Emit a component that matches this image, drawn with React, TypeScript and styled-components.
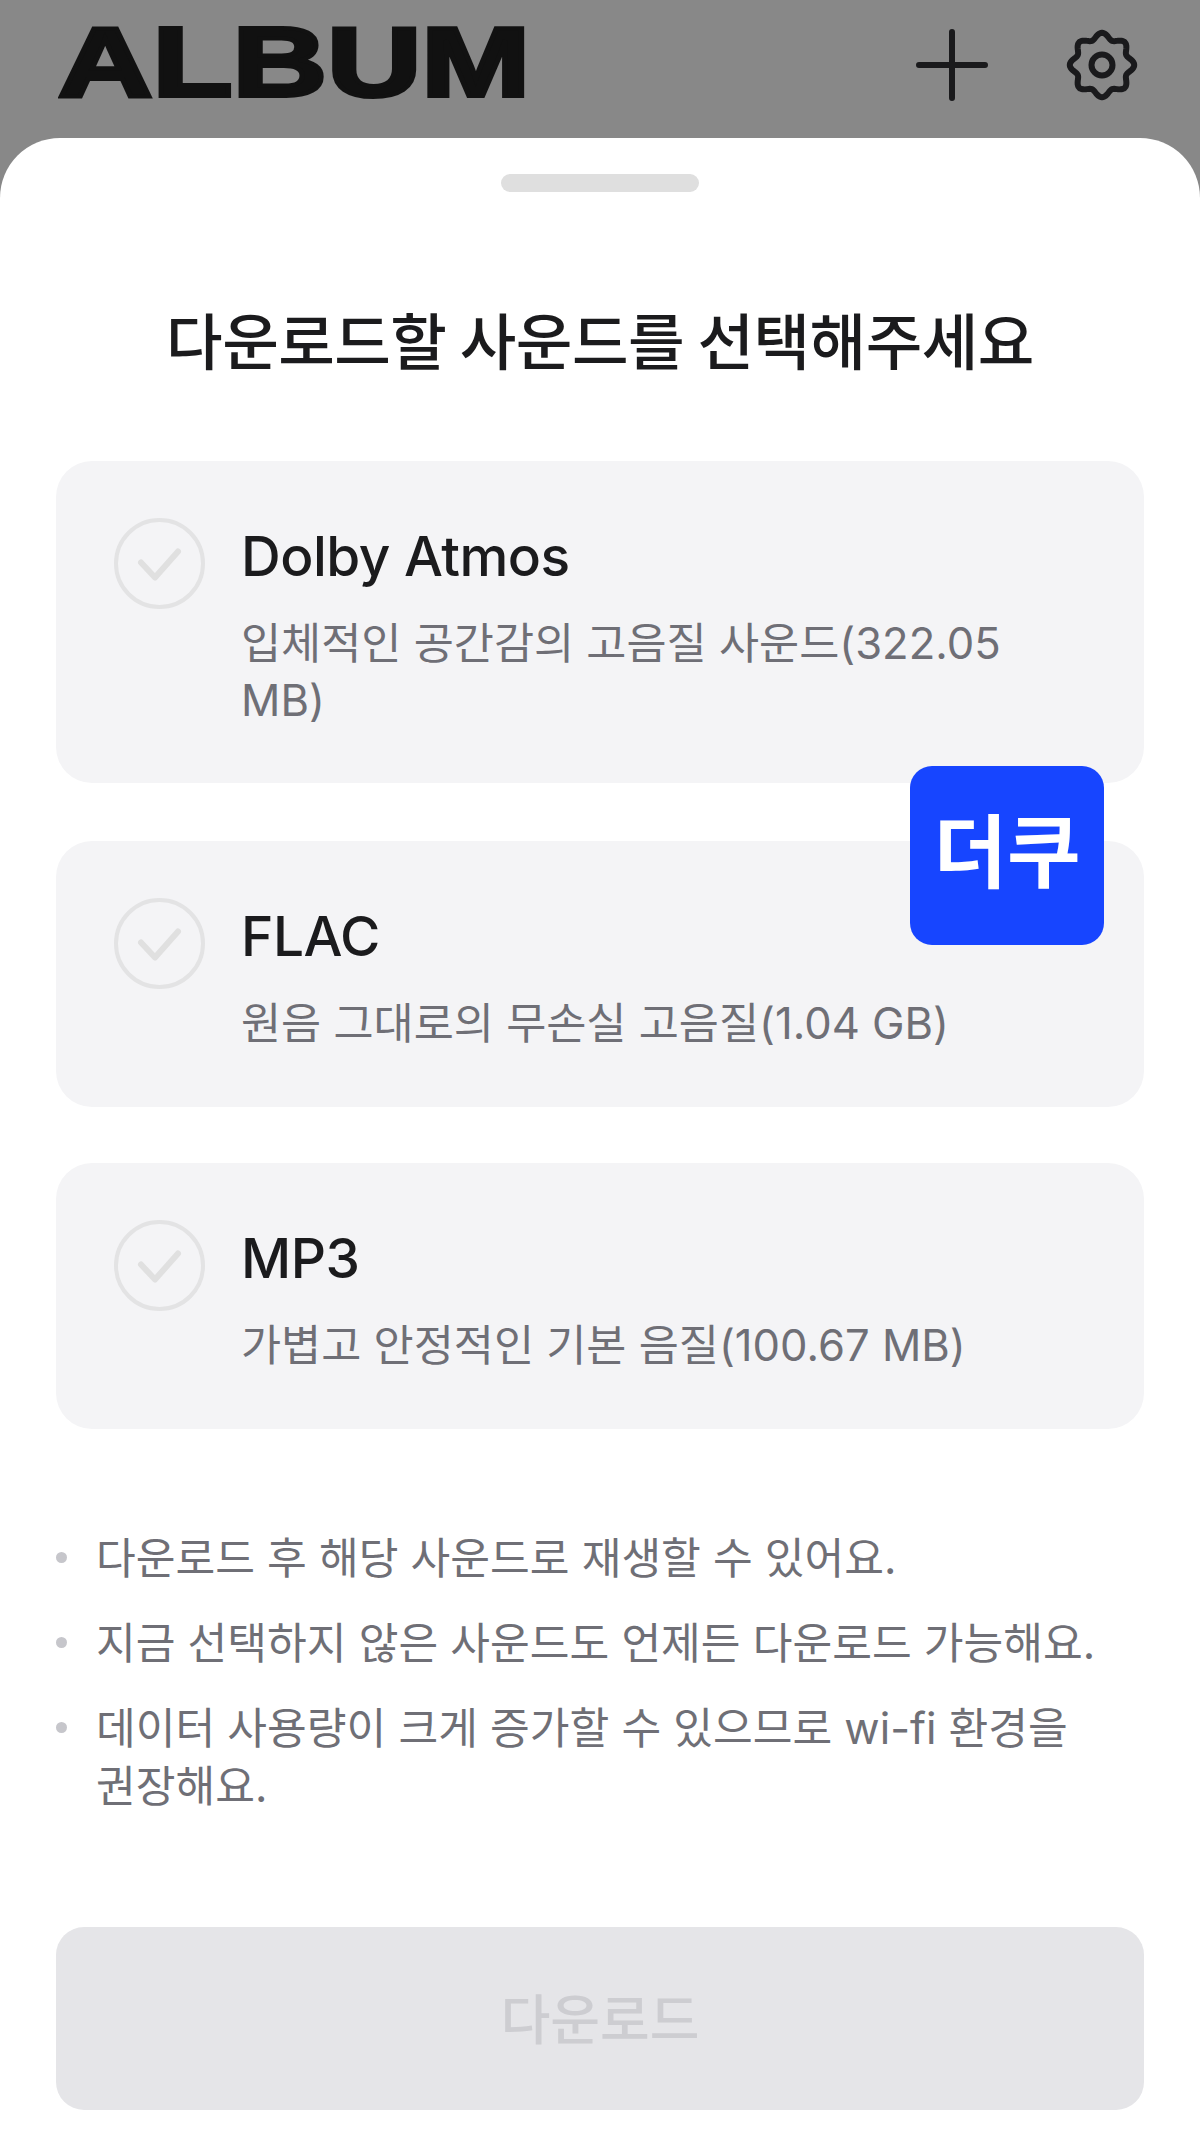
import React from "react";
import styled, { createGlobalStyle } from "styled-components";

const Global = createGlobalStyle`
  html, body { margin: 0; padding: 0; background: #fff; }
  #root { width: 1200px; height: 2152px; overflow: hidden; }
  * { box-sizing: border-box; }
`;

const KR = `"Inter", "Noto Sans CJK KR", sans-serif`;

const Page = styled.div`
  width: 1200px;
  height: 2152px;
  background: #888888;
  display: flex;
  flex-direction: column;
  font-family: ${KR};
`;

const TopBar = styled.header`
  height: 138px;
  flex: none;
  display: flex;
  align-items: flex-start;
  justify-content: space-between;
  padding: 0 58px;
  color: #111;
`;

const Logo = styled.div`
  font-family: "Liberation Sans", sans-serif;
  font-weight: 700;
  font-size: 98px;
  line-height: 72px;
  height: 72px;
  margin-top: 26px;
  transform: scaleX(1.335);
  transform-origin: left center;
  -webkit-text-stroke: 4px #111;
`;

const TopActions = styled.div`
  display: flex;
  align-items: center;
  gap: 76px;
  margin-top: 27px;
  margin-right: 2px;
`;

const Sheet = styled.section`
  position: relative;
  flex: 1;
  background: #ffffff;
  border-radius: 60px 60px 0 0;
  padding: 36px 56px 0;
  display: flex;
  flex-direction: column;
`;

const Handle = styled.div`
  width: 198px;
  height: 18px;
  border-radius: 9px;
  background: #dfdfdf;
  align-self: center;
`;

const Title = styled.h1`
  margin: 112px 0 0;
  text-align: center;
  font-family: "Noto Sans CJK KR", sans-serif;
  font-size: 61.5px;
  line-height: 70px;
  font-weight: 500;
  letter-spacing: -0.5px;
  color: #1b1b1d;
`;

const Options = styled.div`
  margin-top: 87px;
  display: flex;
  flex-direction: column;
  gap: 56px;
`;

const Card = styled.div<{ $h: number }>`
  background: #f4f4f6;
  border-radius: 36px;
  padding: 57px 58px 0;
  display: flex;
  gap: 36px;
  flex: none;
  height: ${(p) => p.$h}px;

  &:first-child {
    margin-bottom: 2px;
  }
`;

const Circle = styled.div`
  flex: none;
  width: 91px;
  height: 91px;
  border-radius: 50%;
  border: 4px solid #e3e3e4;
  display: flex;
  align-items: center;
  justify-content: center;
`;

const CardBody = styled.div`
  display: flex;
  flex-direction: column;
  min-width: 0;
`;

const CardTitle = styled.div`
  font-size: 55px;
  line-height: 64px;
  font-weight: 500;
  color: #1b1b1d;
  letter-spacing: -0.5px;
  margin-top: 6px;
`;

const CardDesc = styled.div`
  margin-top: 27px;
  font-size: 43.6px;
  line-height: 57px;
  font-weight: 400;
  color: #6f6f76;
`;

const Notes = styled.ul`
  list-style: none;
  margin: 100px 0 0;
  padding: 0;
  display: flex;
  flex-direction: column;
  gap: 27px;
`;

const Note = styled.li`
  position: relative;
  padding-left: 40px;
  font-size: 43.2px;
  line-height: 58px;
  font-weight: 400;
  color: #6f6f76;
  word-break: keep-all;

  &::before {
    content: "";
    position: absolute;
    left: 0;
    top: 23px;
    width: 11px;
    height: 11px;
    border-radius: 50%;
    background: #c6c6cb;
  }
`;

const Download = styled.button`
  margin-top: auto;
  margin-bottom: 42px;
  height: 183px;
  width: 100%;
  flex: none;
  border: none;
  border-radius: 28px;
  padding: 0 0 4px;
  background: #e5e5e8;
  color: #cdcdd1;
  font-family: "Noto Sans CJK KR", sans-serif;
  font-size: 54px;
  font-weight: 500;
`;

const Badge = styled.div`
  position: absolute;
  left: 910px;
  top: 628px;
  width: 194px;
  height: 179px;
  border-radius: 22px;
  background: #1745ff;
  color: #fff;
  font-family: "Noto Sans CJK KR", sans-serif;
  font-weight: 700;
  font-size: 80px;
  line-height: 80px;
  text-align: center;
  padding-top: 40px;
`;

const gearPath = (() => {
  const pts: string[] = [];
  const n = 160;
  for (let i = 0; i < n; i++) {
    const t = (i / n) * Math.PI * 2;
    const r = 29.2 + 3 * Math.cos(8 * t);
    const x = 38 + r * Math.sin(t);
    const y = 38 - r * Math.cos(t);
    pts.push(`${i === 0 ? "M" : "L"}${x.toFixed(2)} ${y.toFixed(2)}`);
  }
  return pts.join(" ") + " Z";
})();

const PlusIcon = () => (
  <svg width="72" height="72" viewBox="0 0 72 72" fill="none">
    <path d="M36 3V69M3 36H69" stroke="#1a1a1c" strokeWidth="6" strokeLinecap="round" />
  </svg>
);

const GearIcon = () => (
  <svg width="76" height="76" viewBox="0 0 76 76" fill="none">
    <path d={gearPath} stroke="#1a1a1c" strokeWidth="6" strokeLinejoin="round" />
    <circle cx="38" cy="38" r="10.5" stroke="#1a1a1c" strokeWidth="6" />
  </svg>
);

const Check = () => (
  <svg width="60" height="60" viewBox="0 0 60 60" fill="none">
    <path d="M11 28.5 L25 43.5 L48 17.5" stroke="#e0e0e0" strokeWidth="6" strokeLinecap="round" strokeLinejoin="round" />
  </svg>
);

const options = [
  { h: 322, title: "Dolby Atmos", desc: "입체적인 공간감의 고음질 사운드(322.05 MB)" },
  { h: 266, title: "FLAC", desc: "원음 그대로의 무손실 고음질(1.04 GB)" },
  { h: 266, title: "MP3", desc: "가볍고 안정적인 기본 음질(100.67 MB)" },
];

const notes = [
  "다운로드 후 해당 사운드로 재생할 수 있어요.",
  "지금 선택하지 않은 사운드도 언제든 다운로드 가능해요.",
  "데이터 사용량이 크게 증가할 수 있으므로 wi-fi 환경을 권장해요.",
];

export default function App() {
  return (
    <Page>
      <Global />
      <TopBar>
        <Logo>ALBUM</Logo>
        <TopActions>
          <PlusIcon />
          <GearIcon />
        </TopActions>
      </TopBar>
      <Sheet>
        <Handle />
        <Title>다운로드할 사운드를 선택해주세요</Title>
        <Options>
          {options.map((o) => (
            <Card key={o.title} $h={o.h}>
              <Circle>
                <Check />
              </Circle>
              <CardBody>
                <CardTitle>{o.title}</CardTitle>
                <CardDesc>{o.desc}</CardDesc>
              </CardBody>
            </Card>
          ))}
        </Options>
        <Notes>
          {notes.map((n) => (
            <Note key={n}>{n}</Note>
          ))}
        </Notes>
        <Download>다운로드</Download>
        <Badge>더쿠</Badge>
      </Sheet>
    </Page>
  );
}
